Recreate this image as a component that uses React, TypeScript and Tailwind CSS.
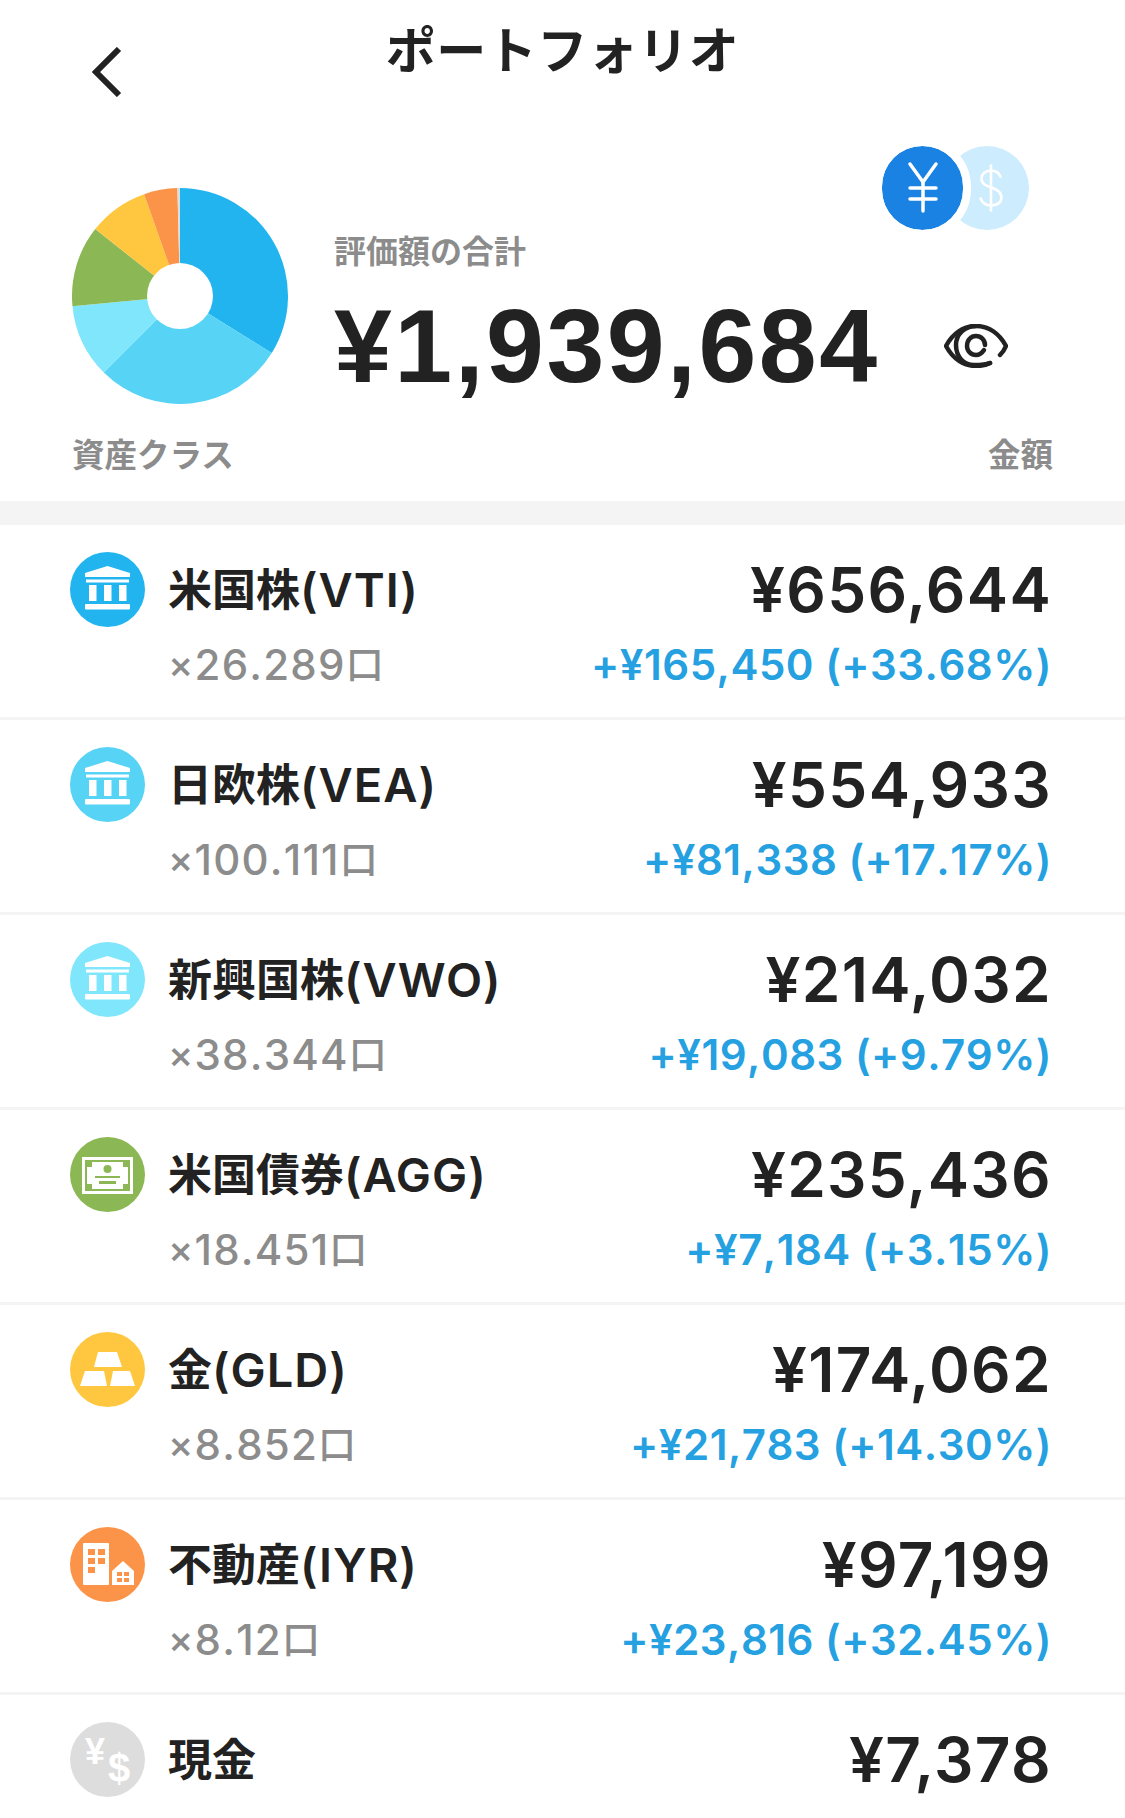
const sans = "font-['Inter','Noto_Sans_CJK_JP',sans-serif]";

type IconKind = "bank" | "bond" | "gold" | "estate" | "cash";

const assets: {
  name: string;
  ticker?: string;
  units?: string;
  value: string;
  amount: number;
  gain?: string;
  color: string;
  icon: IconKind;
}[] = [
  { name: "米国株", ticker: "(VTI)", units: "26.289", value: "¥656,644", amount: 656644, gain: "+¥165,450 (+33.68%)", color: "#22b4ee", icon: "bank" },
  { name: "日欧株", ticker: "(VEA)", units: "100.111", value: "¥554,933", amount: 554933, gain: "+¥81,338 (+17.17%)", color: "#56d3f5", icon: "bank" },
  { name: "新興国株", ticker: "(VWO)", units: "38.344", value: "¥214,032", amount: 214032, gain: "+¥19,083 (+9.79%)", color: "#7fe6fc", icon: "bank" },
  { name: "米国債券", ticker: "(AGG)", units: "18.451", value: "¥235,436", amount: 235436, gain: "+¥7,184 (+3.15%)", color: "#8bb854", icon: "bond" },
  { name: "金", ticker: "(GLD)", units: "8.852", value: "¥174,062", amount: 174062, gain: "+¥21,783 (+14.30%)", color: "#ffc73f", icon: "gold" },
  { name: "不動産", ticker: "(IYR)", units: "8.12", value: "¥97,199", amount: 97199, gain: "+¥23,816 (+32.45%)", color: "#fb9348", icon: "estate" },
  { name: "現金", value: "¥7,378", amount: 7378, color: "#dddddd", icon: "cash" },
];

function Donut() {
  const total = assets.reduce((sum, a) => sum + a.amount, 0);
  let start = 0;
  const slices = assets.map((a) => {
    const end = start + (a.amount / total) * Math.PI * 2;
    const x1 = 108 + 108 * Math.sin(start);
    const y1 = 108 - 108 * Math.cos(start);
    const x2 = 108 + 108 * Math.sin(end);
    const y2 = 108 - 108 * Math.cos(end);
    const large = end - start > Math.PI ? 1 : 0;
    const d = `M108 108 L${x1} ${y1} A108 108 0 ${large} 1 ${x2} ${y2} Z`;
    start = end;
    return <path key={a.name} d={d} fill={a.color} />;
  });
  return (
    <svg width="216" height="216" viewBox="0 0 216 216" className="shrink-0">
      {slices}
      <circle cx="108" cy="108" r="33" fill="#fff" />
    </svg>
  );
}

function AssetIcon({ kind, color }: { kind: IconKind; color: string }) {
  if (kind === "cash") {
    return (
      <div className="relative h-[75px] w-[75px] shrink-0 rounded-full bg-[#dddddd] font-['Liberation_Sans',sans-serif] font-bold text-white">
        <span className="absolute left-[15px] top-[12px] text-[36px] leading-[36px]">¥</span>
        <span className="absolute left-[38px] top-[26px] text-[40px] leading-[40px]">$</span>
      </div>
    );
  }
  return (
    <svg width="75" height="75" viewBox="0 0 75 75" className="shrink-0">
      <circle cx="37.5" cy="37.5" r="37.5" fill={color} />
      {kind === "bank" && (
        <g fill="#fff">
          <path d="M15 21 L37.5 14 L60 21 V25 H15 Z" />
          <rect x="16" y="27.5" width="43" height="3" />
          <rect x="19" y="33" width="7.5" height="16" />
          <rect x="34" y="33" width="7.5" height="16" />
          <rect x="49" y="33" width="7.5" height="16" />
          <rect x="15" y="52" width="45" height="5.5" rx="1" />
        </g>
      )}
      {kind === "bond" && (
        <g>
          <rect x="12" y="20" width="51" height="37" fill="#fff" />
          <rect x="15" y="23" width="45" height="31" fill={color} />
          <rect x="17" y="25" width="41" height="27" fill="#fff" />
          <rect x="17" y="25" width="5" height="5" fill={color} />
          <rect x="53" y="25" width="5" height="5" fill={color} />
          <rect x="17" y="47" width="5" height="5" fill={color} />
          <rect x="53" y="47" width="5" height="5" fill={color} />
          <circle cx="37.5" cy="32" r="4" fill={color} />
          <rect x="25" y="39" width="25" height="2" fill={color} />
          <rect x="29" y="44" width="17" height="3" fill={color} />
        </g>
      )}
      {kind === "gold" && (
        <g fill="#fff">
          <path d="M28 20 H47 L52 35 H24 Z" />
          <path d="M15 39 H34 L37 54 H10 Z" />
          <path d="M43 39 H60 L65 54 H40 Z" />
        </g>
      )}
      {kind === "estate" && (
        <g>
          <rect x="13" y="16" width="26" height="42" rx="1" fill="#fff" />
          <g fill={color}>
            <rect x="18" y="22" width="7" height="6" />
            <rect x="28" y="22" width="7" height="6" />
            <rect x="18" y="31" width="7" height="6" />
            <rect x="28" y="31" width="7" height="6" />
            <rect x="18" y="40" width="7" height="6" />
          </g>
          <path d="M42 44 L53 34 L64 44 V58 H42 Z" fill="#fff" />
          <g fill={color}>
            <rect x="47" y="45" width="5" height="4" />
            <rect x="54" y="45" width="5" height="4" />
            <rect x="47" y="51" width="5" height="4" />
            <rect x="54" y="51" width="5" height="4" />
          </g>
        </g>
      )}
    </svg>
  );
}

function CurrencyToggle() {
  return (
    <div className="mr-[24px] flex justify-end">
      <div className="relative z-10 flex h-[84px] w-[81px] items-center justify-center rounded-full bg-[#1a82e2] outline-[8px] outline-white">
        <svg width="32" height="54" viewBox="0 0 32 54" fill="none" stroke="#fff" strokeWidth="3.5" strokeLinecap="round">
          <path d="M3 3 L16 21 L29 3" />
          <path d="M16 21 V50" />
          <path d="M3 27 H29" />
          <path d="M3 38 H29" />
        </svg>
      </div>
      <div className="ml-[-18px] flex h-[84px] w-[84px] items-center justify-center rounded-full bg-[#cdecfd] pl-[7px]">
        <svg width="26" height="54" viewBox="0 0 30 56" fill="none" stroke="#fff" strokeWidth="3" strokeLinecap="round">
          <path d="M26 15 C24 10 20 8 15 8 C8 8 4 12 4 17 C4 30 27 25 27 39 C27 45 22 48 15 48 C9 48 5 45 3 40" />
          <path d="M15 2 V54" />
        </svg>
      </div>
    </div>
  );
}

function EyeIcon() {
  return (
    <svg width="64" height="44" viewBox="0 0 64 44" fill="none" stroke="#222" strokeWidth="4.5" strokeLinecap="round" className="shrink-0">
      <path d="M56 31 Q60 27 62 22 C55 9 44 2 32 2 C20 2 9 9 2 22 C9 35 20 42 32 42 C38 42 42 41 46 39" />
      <path d="M46 39 C42 41 36 41 30 41 C19 41 12 32 12 21 C12 10 21 2 32 2" />
      <path d="M40 26 C38 29 35 31 32 31 C27 31 23 27 23 22 C23 16 27 12 32 12 C37 12 41 16 41 21" />
    </svg>
  );
}

export default function App() {
  return (
    <div className={`h-[1818px] overflow-hidden bg-white text-[#222222] ${sans}`}>
      <header className="grid h-[146px] grid-cols-[1fr_auto_1fr] items-start">
        <svg width="30" height="50" viewBox="0 0 30 50" fill="none" stroke="#222" strokeWidth="6" className="ml-[92px] mt-[47px]">
          <path d="M27 2 L4 25 L27 48" />
        </svg>
        <h1 className="mt-[21px] text-[50px] font-bold leading-[60px] tracking-[0.5px]">ポートフォリオ</h1>
      </header>

      <section className="h-[355px] px-[72px]">
        <div className="flex">
          <div className="mt-[42px]">
            <Donut />
          </div>
          <div className="ml-[46px] flex-1">
            <CurrencyToggle />
            <p className="mt-[2px] text-[32px] font-bold leading-[40px] text-[#8c8c8c]">評価額の合計</p>
            <div className="mt-[24px] flex items-center justify-between pr-[45px]">
              <span className="font-['Liberation_Sans',sans-serif] text-[104px] font-bold leading-[100px] tracking-[2.5px]">¥1,939,684</span>
              <EyeIcon />
            </div>
          </div>
        </div>
        <div className="mt-[30px] flex justify-between text-[32.5px] font-bold leading-[44px] text-[#8c8c8c]">
          <span>資産クラス</span>
          <span>金額</span>
        </div>
      </section>

      <div className="h-[24px] bg-[#f4f4f4]" />

      {assets.map((a) => (
        <div key={a.name} className="flex h-[195px] items-start border-b-[3px] border-[#f4f4f4] pl-[70px] pr-[73px] pt-[27px]">
          <AssetIcon kind={a.icon} color={a.color} />
          <div className="ml-[23px] flex-1">
            <div className="flex h-[75px] items-center pt-[1px] text-[44px] font-semibold">
              {a.name}
              {a.ticker && <span className="text-[47px] font-semibold tracking-[1px]">{a.ticker}</span>}
            </div>
            {a.units && (
              <div className="flex h-[75px] items-center text-[42px] font-medium tracking-[1.2px] text-[#8c8c8c] [font-kerning:none]">
                <span className="text-[38px]">×</span>
                {a.units}
                <span className="text-[38px]">口</span>
              </div>
            )}
          </div>
          <div className="text-right">
            <div className="h-[75px] text-[62px] font-semibold leading-[75px] tracking-[1.3px]">{a.value}</div>
            {a.gain && <div className="h-[75px] text-[42px] font-semibold leading-[75px] tracking-[0.5px] text-[#25a0e0] [font-kerning:none]">{a.gain}</div>}
          </div>
        </div>
      ))}
    </div>
  );
}
